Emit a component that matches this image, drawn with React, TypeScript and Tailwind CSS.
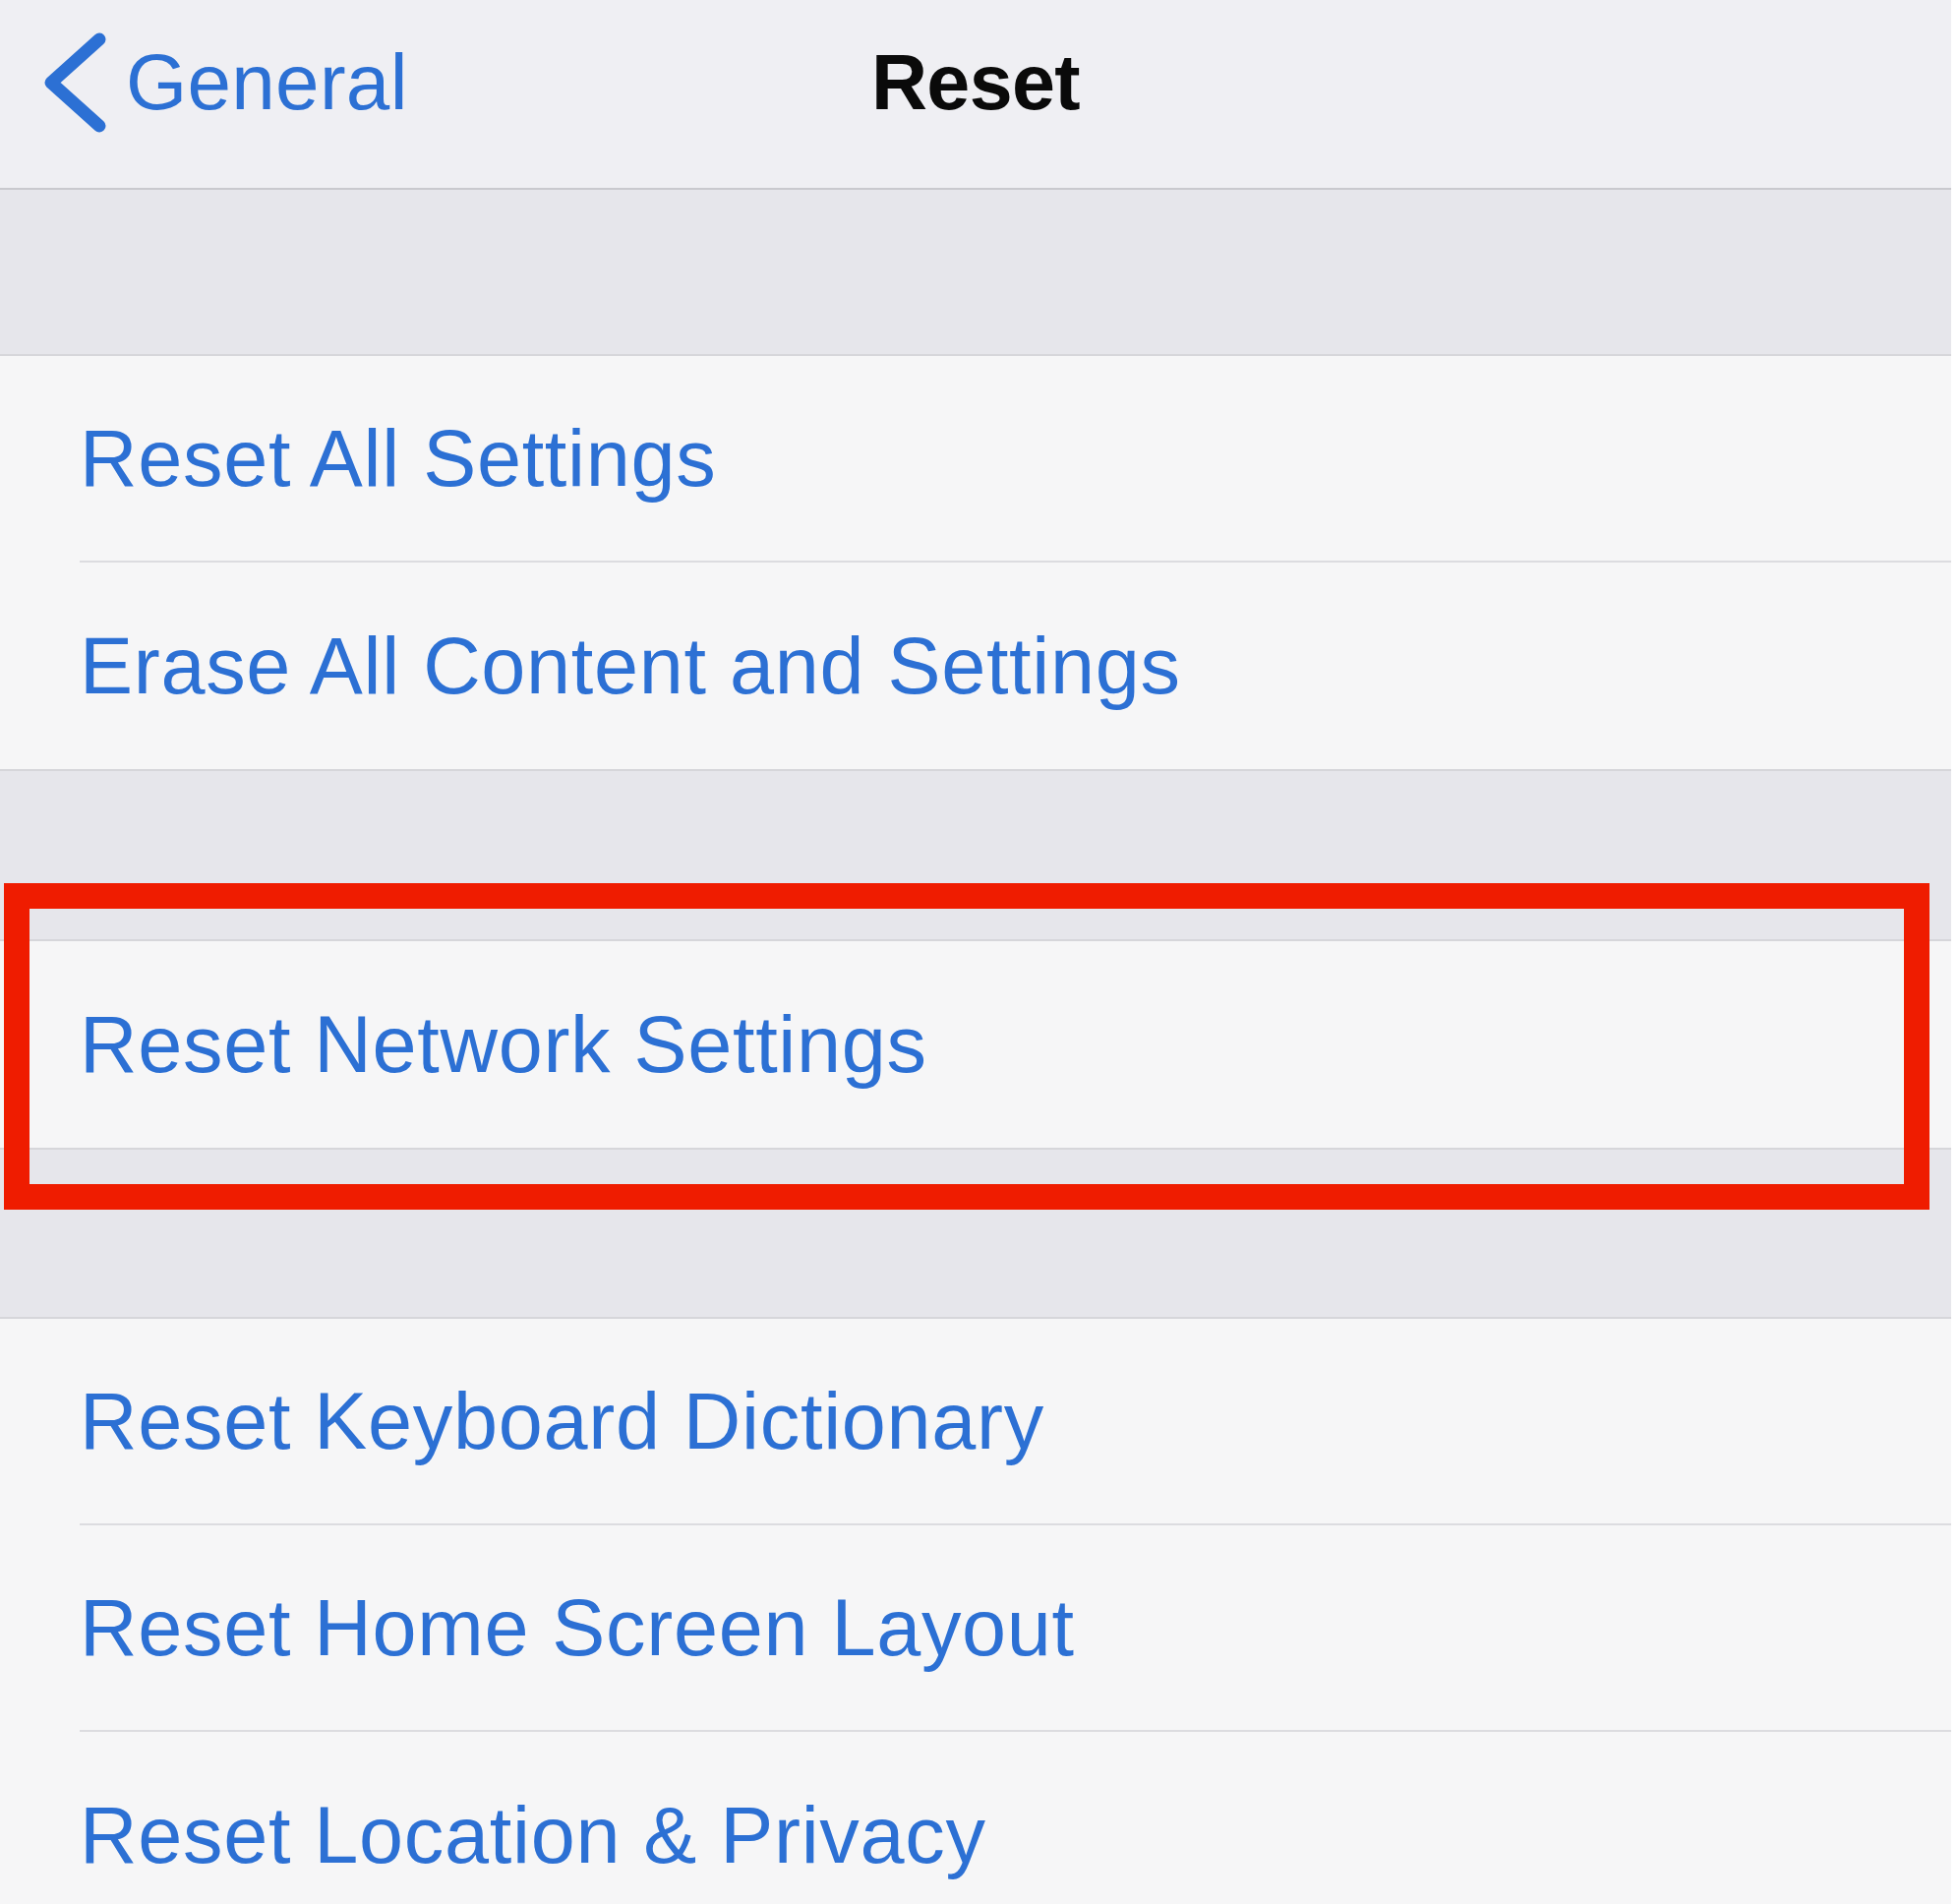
const GROUP_ONE = ['Reset All Settings', 'Erase All Content and Settings'];
const GROUP_THREE = ['Reset Keyboard Dictionary', 'Reset Home Screen Layout', 'Reset Location & Privacy'];

function Row({ label, last }: { label: string; last?: boolean }) {
  return (
    <div className="h-[210px] pl-[81px] flex">
      <div className={`flex-1 flex items-center ${last ? '' : 'border-b-2 border-[#dcdce0]'}`}>
        <span className="text-[81px] leading-none text-[#2c70d4] tracking-[0.7px]">{label}</span>
      </div>
    </div>
  );
}

function Group({ items }: { items: string[] }) {
  return (
    <div className="bg-[#f6f6f7] border-y-2 border-[#d6d6da]">
      {items.map((label, i) => (
        <Row key={label} label={label} last={i === items.length - 1} />
      ))}
    </div>
  );
}

export default function App() {
  return (
    <div className="w-[1992px] h-[1936px] overflow-hidden bg-white" style={{ fontFamily: '"Liberation Sans", Arial, sans-serif' }}>
      <div className="w-[1984px] bg-[#e6e6eb]">
        {/* Nav bar */}
        <div className="h-[193px] bg-[#efeff3] border-b-2 border-[#c9c9ce] grid grid-cols-[1fr_auto_1fr] items-center pb-[24px]">
          <div className="flex items-center pl-[42px]">
            <svg width="66" height="106" viewBox="0 0 66 106" fill="none">
              <path d="M59 9 L10 53 L59 97" stroke="#2c70d4" strokeWidth="13" strokeLinecap="round" strokeLinejoin="round" />
            </svg>
            <span className="ml-[20px] text-[80px] leading-none text-[#2c70d4] tracking-[0.3px]">General</span>
          </div>
          <span className="text-[79px] leading-none font-bold text-[#0a0a0a] tracking-[-0.6px]">Reset</span>
          <div />
        </div>

        <div className="h-[167px]" />
        <Group items={GROUP_ONE} />

        {/* Highlighted network row */}
        <div className="relative">
          <div className="h-[171px]" />
          <Group items={['Reset Network Settings']} />
          <div className="h-[170px]" />
          <div className="absolute left-[4px] top-[114px] w-[1958px] h-[332px] border-[26px] border-[#ef1c00]" />
        </div>

        <Group items={GROUP_THREE} />
      </div>
    </div>
  );
}
